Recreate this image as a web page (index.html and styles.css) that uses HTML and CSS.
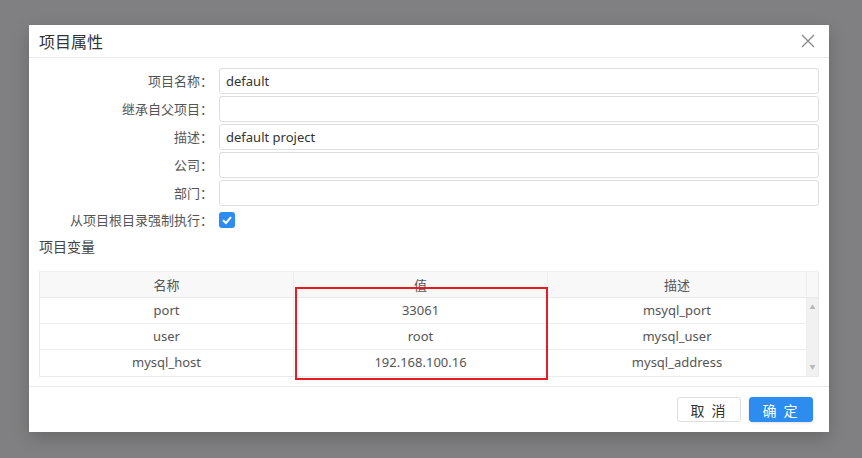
FILE: index.html
```html
<!DOCTYPE html>
<html lang="zh-CN">
<head>
    <meta charset="UTF-8">
    <title>项目属性</title>
    <link rel="stylesheet" href="styles.css">
</head>
<body>

    <div class="modal">
        <div class="modal-header">
            <span class="modal-title">项目属性</span>
            <svg class="close-btn" width="14" height="14" viewBox="0 0 14 14">
                <path d="M1 1 L13 13 M13 1 L1 13" stroke="#8a8a8a" stroke-width="1.4" fill="none"/>
            </svg>
        </div>

        <div class="modal-body">
            <div class="form">
                <label>项目名称：</label>
                <div class="input">default</div>
                <label>继承自父项目：</label>
                <div class="input"></div>
                <label>描述：</label>
                <div class="input">default project</div>
                <label>公司：</label>
                <div class="input"></div>
                <label>部门：</label>
                <div class="input"></div>
                <label class="check-label">从项目根目录强制执行：</label>
                <div class="check-row">
                    <span class="checkbox">
                        <svg width="16" height="16" viewBox="0 0 16 16">
                            <path d="M4 8.2 L7 11 L12 5.2" stroke="#fff" stroke-width="2" fill="none"/>
                        </svg>
                    </span>
                </div>
            </div>

            <div class="section-title">项目变量</div>

            <div class="table-wrap">
                <div class="table-head">
                    <div class="cell">名称</div>
                    <div class="cell">值</div>
                    <div class="cell">描述</div>
                    <div class="cell gutter"></div>
                </div>
                <div class="table-body">
                    <div class="rows">
                        <div class="row">
                            <div class="cell">port</div>
                            <div class="cell">33061</div>
                            <div class="cell">msyql_port</div>
                        </div>
                        <div class="row">
                            <div class="cell">user</div>
                            <div class="cell">root</div>
                            <div class="cell">mysql_user</div>
                        </div>
                        <div class="row">
                            <div class="cell">mysql_host</div>
                            <div class="cell">192.168.100.16</div>
                            <div class="cell">mysql_address</div>
                        </div>
                    </div>
                    <div class="scrollbar">
                        <span class="arrow">&#9650;</span>
                        <span class="arrow">&#9660;</span>
                    </div>
                </div>
                <div class="highlight"></div>
            </div>
        </div>

        <div class="modal-footer">
            <button class="btn btn-cancel">取 消</button>
            <button class="btn btn-ok">确 定</button>
        </div>
    </div>

</body>
</html>
```

FILE: styles.css
```css
* {
    margin: 0;
    padding: 0;
    box-sizing: border-box;
}

body {
    font-family: "Noto Sans", "Noto Sans CJK SC", sans-serif;
    font-size: 13px;
    color: #555;
    background: #808082;
    width: 862px;
    height: 458px;
    padding: 25px 0 0 29px;
    overflow: hidden;
}

.modal {
    width: 800px;
    height: 407px;
    background: #fff;
    box-shadow: 0 6px 16px rgba(0, 0, 0, 0.18);
    display: flex;
    flex-direction: column;
}

.modal-header {
    height: 33px;
    border-bottom: 1px solid #e8eaec;
    display: flex;
    align-items: center;
    justify-content: space-between;
    padding: 0 14px 0 10px;
}

.modal-title {
    font-size: 16px;
    color: #333;
    font-family: "Noto Sans CJK SC", sans-serif;
}

.modal-body {
    padding: 10px 10px 0 10px;
    flex: 1;
}

.form {
    display: grid;
    grid-template-columns: 174px 600px;
    column-gap: 6px;
    row-gap: 2px;
    grid-auto-rows: 26px;
}

.form label {
    text-align: right;
    line-height: 26px;
    color: #555;
    font-family: "Noto Sans CJK SC", sans-serif;
}

.input {
    border: 1px solid #dcdee2;
    border-radius: 3px;
    padding: 0 6px;
    line-height: 24px;
    color: #333;
}

.form .check-label {
    line-height: 24px;
}

.check-row {
    display: flex;
    align-items: center;
    padding-bottom: 2px;
}

.checkbox {
    width: 16px;
    height: 16px;
    border-radius: 3px;
    background: #2d8cf0;
    display: flex;
}

.section-title {
    font-size: 14px;
    color: #444;
    font-family: "Noto Sans CJK SC", sans-serif;
    margin-top: 2px;
    line-height: 20px;
}

.table-wrap {
    position: relative;
    margin-top: 15px;
    width: 780px;
    border: 1px solid #e8eaec;
    border-top-color: #f0f0f0;
}

.table-head {
    display: grid;
    grid-template-columns: 254px 254px 259px 1fr;
    background: #f8f8f9;
    height: 26px;
    border-bottom: 1px solid #e8eaec;
}

.cell {
    text-align: center;
    line-height: 25px;
    border-right: 1px solid #eceef0;
    color: #555;
}

.table-head .cell {
    font-family: "Noto Sans CJK SC", sans-serif;
    color: #555;
}

.table-head .gutter {
    border-right: none;
}

.table-body {
    display: flex;
}

.rows {
    width: 767px;
}

.row {
    display: grid;
    grid-template-columns: 254px 254px 259px;
    height: 26px;
    border-bottom: 1px solid #eceef0;
}

.row:last-child {
    border-bottom: none;
}

.scrollbar {
    flex: 1;
    background: #f1f1f1;
    display: flex;
    flex-direction: column;
    justify-content: space-between;
    align-items: center;
    padding: 5px 0;
}

.arrow {
    font-size: 6px;
    color: #b8b8b8;
    line-height: 8px;
}

.highlight {
    position: absolute;
    left: 255px;
    top: 15px;
    width: 253px;
    height: 93px;
    border: 2px solid #e51c23;
}

.modal-footer {
    border-top: 1px solid #e8eaec;
    padding: 10px 16px 10px 0;
    display: flex;
    justify-content: flex-end;
    gap: 8px;
}

.btn {
    width: 64px;
    height: 25px;
    border-radius: 3px;
    font-family: "Noto Sans CJK SC", sans-serif;
    font-size: 14px;
    letter-spacing: 2px;
    cursor: pointer;
}

.btn-cancel {
    background: #fff;
    border: 1px solid #dcdee2;
    color: #333;
}

.btn-ok {
    background: #2d8cf0;
    border: 1px solid #2d8cf0;
    color: #fff;
    box-shadow: 0 1px 3px rgba(0, 0, 0, 0.12);
}
```
